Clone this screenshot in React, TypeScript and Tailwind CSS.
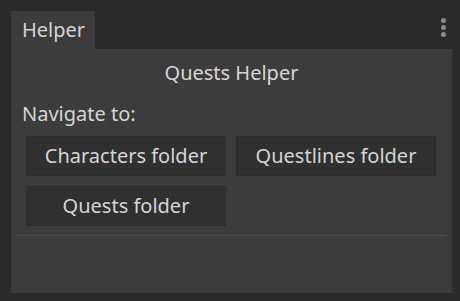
export default function App() {
  const font = { fontFamily: '"Noto Sans", "Open Sans", sans-serif' };
  return (
    <div
      className="flex h-[301px] w-[460px] flex-col bg-[#2a2a2a] pb-[8px] pl-[11px] pr-[7px] pt-[11px] text-[20px] text-[#d4d4d4]"
      style={font}
    >
      <div className="flex h-[38px] items-start">
        <div className="flex h-[38px] w-[84px] items-center bg-[#3c3c3c] pl-[11px] leading-none">
          Helper
        </div>
        <div className="flex-1" />
        <div className="mr-[7px] mt-[7px] flex flex-col gap-[2px]">
          <span className="h-[5px] w-[5px] rounded-full bg-[#8a8a8a]" />
          <span className="h-[5px] w-[5px] rounded-full bg-[#8a8a8a]" />
          <span className="h-[5px] w-[5px] rounded-full bg-[#8a8a8a]" />
        </div>
      </div>
      <div className="flex flex-1 flex-col border-r border-[#2e2e2e] bg-[#3c3c3c] px-[5px] pt-[11px]">
        <div className="h-[25px] text-center leading-[25px]">Quests Helper</div>
        <div className="mt-[16px] h-[25px] pl-[6px] leading-[25px]">Navigate to:</div>
        <div className="ml-[10px] mt-[10px] grid w-[410px] grid-cols-2 gap-[10px]">
          <Btn label="Characters folder" />
          <Btn label="Questlines folder" />
          <Btn label="Quests folder" />
        </div>
        <div className="mt-[9px] h-px bg-[#505050]" />
      </div>
    </div>
  );
}

function Btn({ label }: { label: string }) {
  return (
    <div className="flex h-[40px] items-center justify-center border border-[#2c2c2c] bg-[#303030] leading-none">
      {label}
    </div>
  );
}
